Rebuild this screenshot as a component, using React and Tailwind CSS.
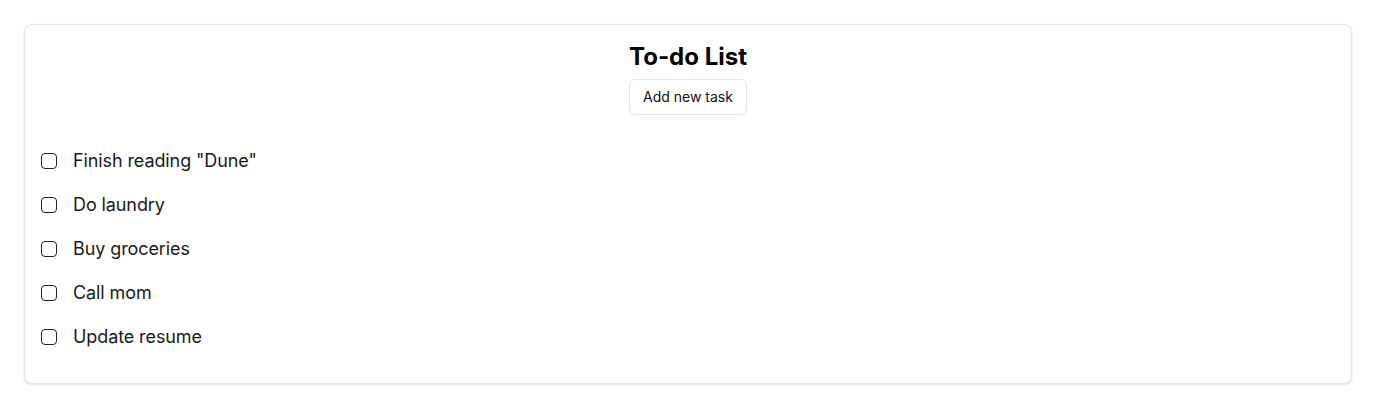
import React from 'react'

const tasks = ['Finish reading "Dune"', 'Do laundry', 'Buy groceries', 'Call mom', 'Update resume']

const App = () => {
    return (
        <div className="w-full min-h-screen bg-white p-6" style={{ fontFamily: 'Inter, "Noto Sans", sans-serif' }}>
            <div className="border border-gray-200 rounded-lg shadow-sm bg-white px-4 pt-4 pb-8">
                <div className="flex flex-col items-center">
                    <h1 className="text-2xl font-bold text-black leading-8">To-do List</h1>
                    <button className="mt-1.5 h-9 px-[13px] text-sm text-[#111] border border-gray-200 rounded-md bg-white">
                        Add new task
                    </button>
                </div>
                <ul className="mt-[32px] flex flex-col gap-4">
                    {tasks.map((task) => (
                        <li key={task} className="flex items-center gap-4 h-7">
                            <span className="w-4 h-4 border border-[#222] rounded-[4px] shrink-0"></span>
                            <span className="text-lg text-[#1a1a1a] tracking-[-0.1px]">{task}</span>
                        </li>
                    ))}
                </ul>
            </div>
        </div>
    )
}

export default App
